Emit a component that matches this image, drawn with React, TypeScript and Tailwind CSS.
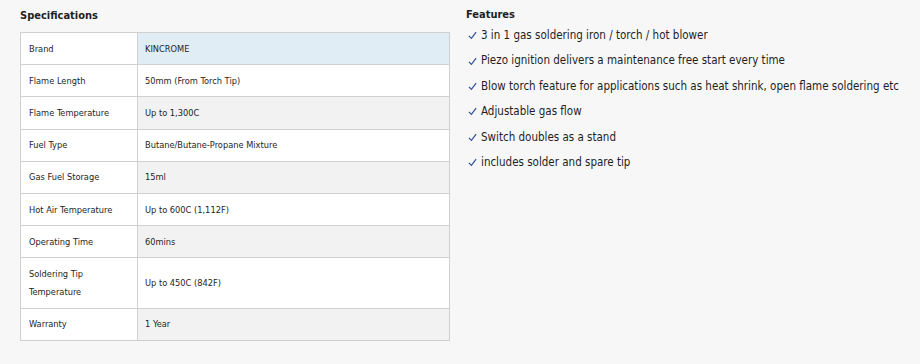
const specs: [string, string][] = [
  ['Brand', 'KINCROME'],
  ['Flame Length', '50mm (From Torch Tip)'],
  ['Flame Temperature', 'Up to 1,300C'],
  ['Fuel Type', 'Butane/Butane-Propane Mixture'],
  ['Gas Fuel Storage', '15ml'],
  ['Hot Air Temperature', 'Up to 600C (1,112F)'],
  ['Operating Time', '60mins'],
  ['Soldering Tip Temperature', 'Up to 450C (842F)'],
  ['Warranty', '1 Year'],
]

const features = [
  '3 in 1 gas soldering iron / torch / hot blower',
  'Piezo ignition delivers a maintenance free start every time',
  'Blow torch feature for applications such as heat shrink, open flame soldering etc',
  'Adjustable gas flow',
  'Switch doubles as a stand',
  'includes solder and spare tip',
]

export default function App() {
  return (
    <div
      className="w-[920px] h-[364px] bg-[#f7f7f7] text-[#1e1e1e] flex gap-4 px-5"
      style={{ fontFamily: '"DejaVu Sans Condensed", "DejaVu Sans", sans-serif' }}
    >
      <div className="w-[430px]">
        <h3 className="pt-[8px] h-[32px] text-[11px] font-bold">Specifications</h3>
        <table className="w-full border-collapse text-[9.2px]">
          <tbody>
            {specs.map(([label, value], i) => (
              <tr key={label}>
                <td className="w-[117px] border border-[#d0d0d0] bg-white pl-[8px] pr-[6px] py-[6.6px] leading-[18px] align-middle">
                  {label}
                </td>
                <td
                  className={
                    'border border-[#d0d0d0] px-[7px] py-[6.6px] leading-[18px] align-middle ' +
                    (i === 0 ? 'bg-[#e1edf5]' : i % 2 === 1 ? 'bg-white' : 'bg-[#f2f2f2]')
                  }
                >
                  {value}
                </td>
              </tr>
            ))}
          </tbody>
        </table>
      </div>

      <div className="flex-1">
        <h3 className="pt-[7px] text-[11px] font-bold leading-[16px]">Features</h3>
        <ul className="text-[11.5px] leading-[25.4px]">
          {features.map((f) => (
            <li key={f} className="flex items-center">
              <svg viewBox="0 0 10 10" className="w-[9px] h-[9px] ml-[2px] mr-[4px] shrink-0">
                <path d="M1 5.4 L3.8 8.2 L9 1.2" fill="none" stroke="#34529a" strokeWidth="1.4" />
              </svg>
              <span>{f}</span>
            </li>
          ))}
        </ul>
      </div>
    </div>
  )
}
